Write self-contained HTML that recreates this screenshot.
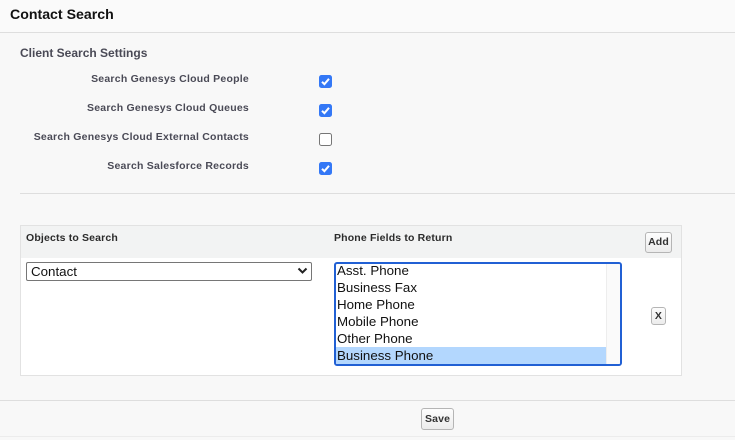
<!DOCTYPE html>
<html>
<head>
<meta charset="utf-8">
<style>
html,body{margin:0;padding:0;width:735px;height:440px;overflow:hidden;background:#f8f8f8;font-family:"Liberation Sans",Arial,sans-serif;}
.a{position:absolute;white-space:nowrap;}
.lbl{font-size:10.5px;font-weight:bold;color:#4a4a56;right:486px;line-height:14px;letter-spacing:.23px;}
.cb{position:absolute;left:319px;width:13px;height:13px;border-radius:2.5px;background:#3478f6;}
.cb svg{position:absolute;left:0;top:0;}
.cb.off{background:#fff;border:1px solid #767676;width:11px;height:11px;}
.btn{position:absolute;box-sizing:border-box;background:linear-gradient(#fdfdfd,#ececec);border:1px solid #b5b5b5;border-radius:3px;font-weight:bold;font-size:10.5px;color:#333;text-align:center;letter-spacing:.15px;}
.th{font-size:10.5px;font-weight:bold;color:#2b2b2b;line-height:14px;letter-spacing:.16px;}
.opt{position:absolute;left:2px;font-size:13.33px;line-height:17px;height:17px;color:#111;}
</style>
</head>
<body>
<div class="a" style="left:0;top:0;width:735px;height:32px;background:#fafafa;"></div>
<div class="a" style="left:0;top:32px;width:735px;height:1px;background:#dedede;"></div>
<div class="a" style="left:10px;top:6px;font-size:14.15px;font-weight:bold;color:#111;line-height:17px;">Contact Search</div>
<div class="a" style="left:20px;top:46px;font-size:12px;font-weight:bold;color:#4a4a56;line-height:15px;">Client Search Settings</div>

<div class="a lbl" style="top:72px;">Search Genesys Cloud People</div>
<div class="a lbl" style="top:101px;">Search Genesys Cloud Queues</div>
<div class="a lbl" style="top:130px;">Search Genesys Cloud External Contacts</div>
<div class="a lbl" style="top:159px;">Search Salesforce Records</div>

<div class="cb" style="top:75px;"><svg width="13" height="13" viewBox="0 0 13 13"><path d="M3 6.8 L5.4 9.2 L10 3.8" fill="none" stroke="#fff" stroke-width="2"/></svg></div>
<div class="cb" style="top:104px;"><svg width="13" height="13" viewBox="0 0 13 13"><path d="M3 6.8 L5.4 9.2 L10 3.8" fill="none" stroke="#fff" stroke-width="2"/></svg></div>
<div class="cb off" style="top:133px;"></div>
<div class="cb" style="top:162px;"><svg width="13" height="13" viewBox="0 0 13 13"><path d="M3 6.8 L5.4 9.2 L10 3.8" fill="none" stroke="#fff" stroke-width="2"/></svg></div>

<div class="a" style="left:20px;top:193px;width:715px;height:1px;background:#dedede;"></div>

<!-- Table -->
<div class="a" style="left:20px;top:225px;width:660px;height:149px;background:#fff;border:1px solid #e2e2e2;"></div>
<div class="a" style="left:21px;top:226px;width:660px;height:32px;background:#f2f3f3;"></div>
<div class="a th" style="left:26px;top:231px;">Objects to Search</div>
<div class="a th" style="left:334px;top:231px;">Phone Fields to Return</div>
<div class="btn" style="left:645px;top:232px;width:27px;height:21px;line-height:19px;">Add</div>

<!-- Dropdown -->
<div class="a" style="left:26px;top:262px;width:284px;height:17px;background:#fff;border:1px solid #767676;border-radius:2px;"></div>
<div class="a" style="left:31px;top:264px;font-size:13.33px;line-height:16px;color:#111;">Contact</div>
<svg class="a" style="left:297px;top:267px;" width="11" height="8" viewBox="0 0 11 8"><path d="M1.5 1.5 L5.5 5.5 L9.5 1.5" fill="none" stroke="#222" stroke-width="2"/></svg>

<!-- Listbox -->
<div class="a" style="left:334px;top:262px;width:284px;height:100px;background:#fff;border:2px solid #2160d4;border-radius:3px;overflow:hidden;">
  <div class="a" style="left:270px;top:0;width:15px;height:100px;background:#fafafa;border-left:1px solid #ededed;"></div>
  <div class="a" style="left:0;top:83px;width:270px;height:17px;background:#b3d7fe;"></div>
  <div class="opt" style="top:-2px;left:1px;">Asst. Phone</div>
  <div class="opt" style="top:15px;left:1px;">Business Fax</div>
  <div class="opt" style="top:32px;left:1px;">Home Phone</div>
  <div class="opt" style="top:49px;left:1px;">Mobile Phone</div>
  <div class="opt" style="top:66px;left:1px;">Other Phone</div>
  <div class="opt" style="top:83px;left:1px;">Business Phone</div>
</div>

<div class="btn" style="left:651px;top:307px;width:15px;height:18px;line-height:16px;">X</div>

<!-- Footer -->
<div class="a" style="left:0;top:400px;width:735px;height:1px;background:#dedede;"></div>
<div class="a" style="left:0;top:436px;width:735px;height:1px;background:#ececec;"></div>
<div class="btn" style="left:421px;top:408px;width:33px;height:22px;line-height:21px;">Save</div>
</body>
</html>
